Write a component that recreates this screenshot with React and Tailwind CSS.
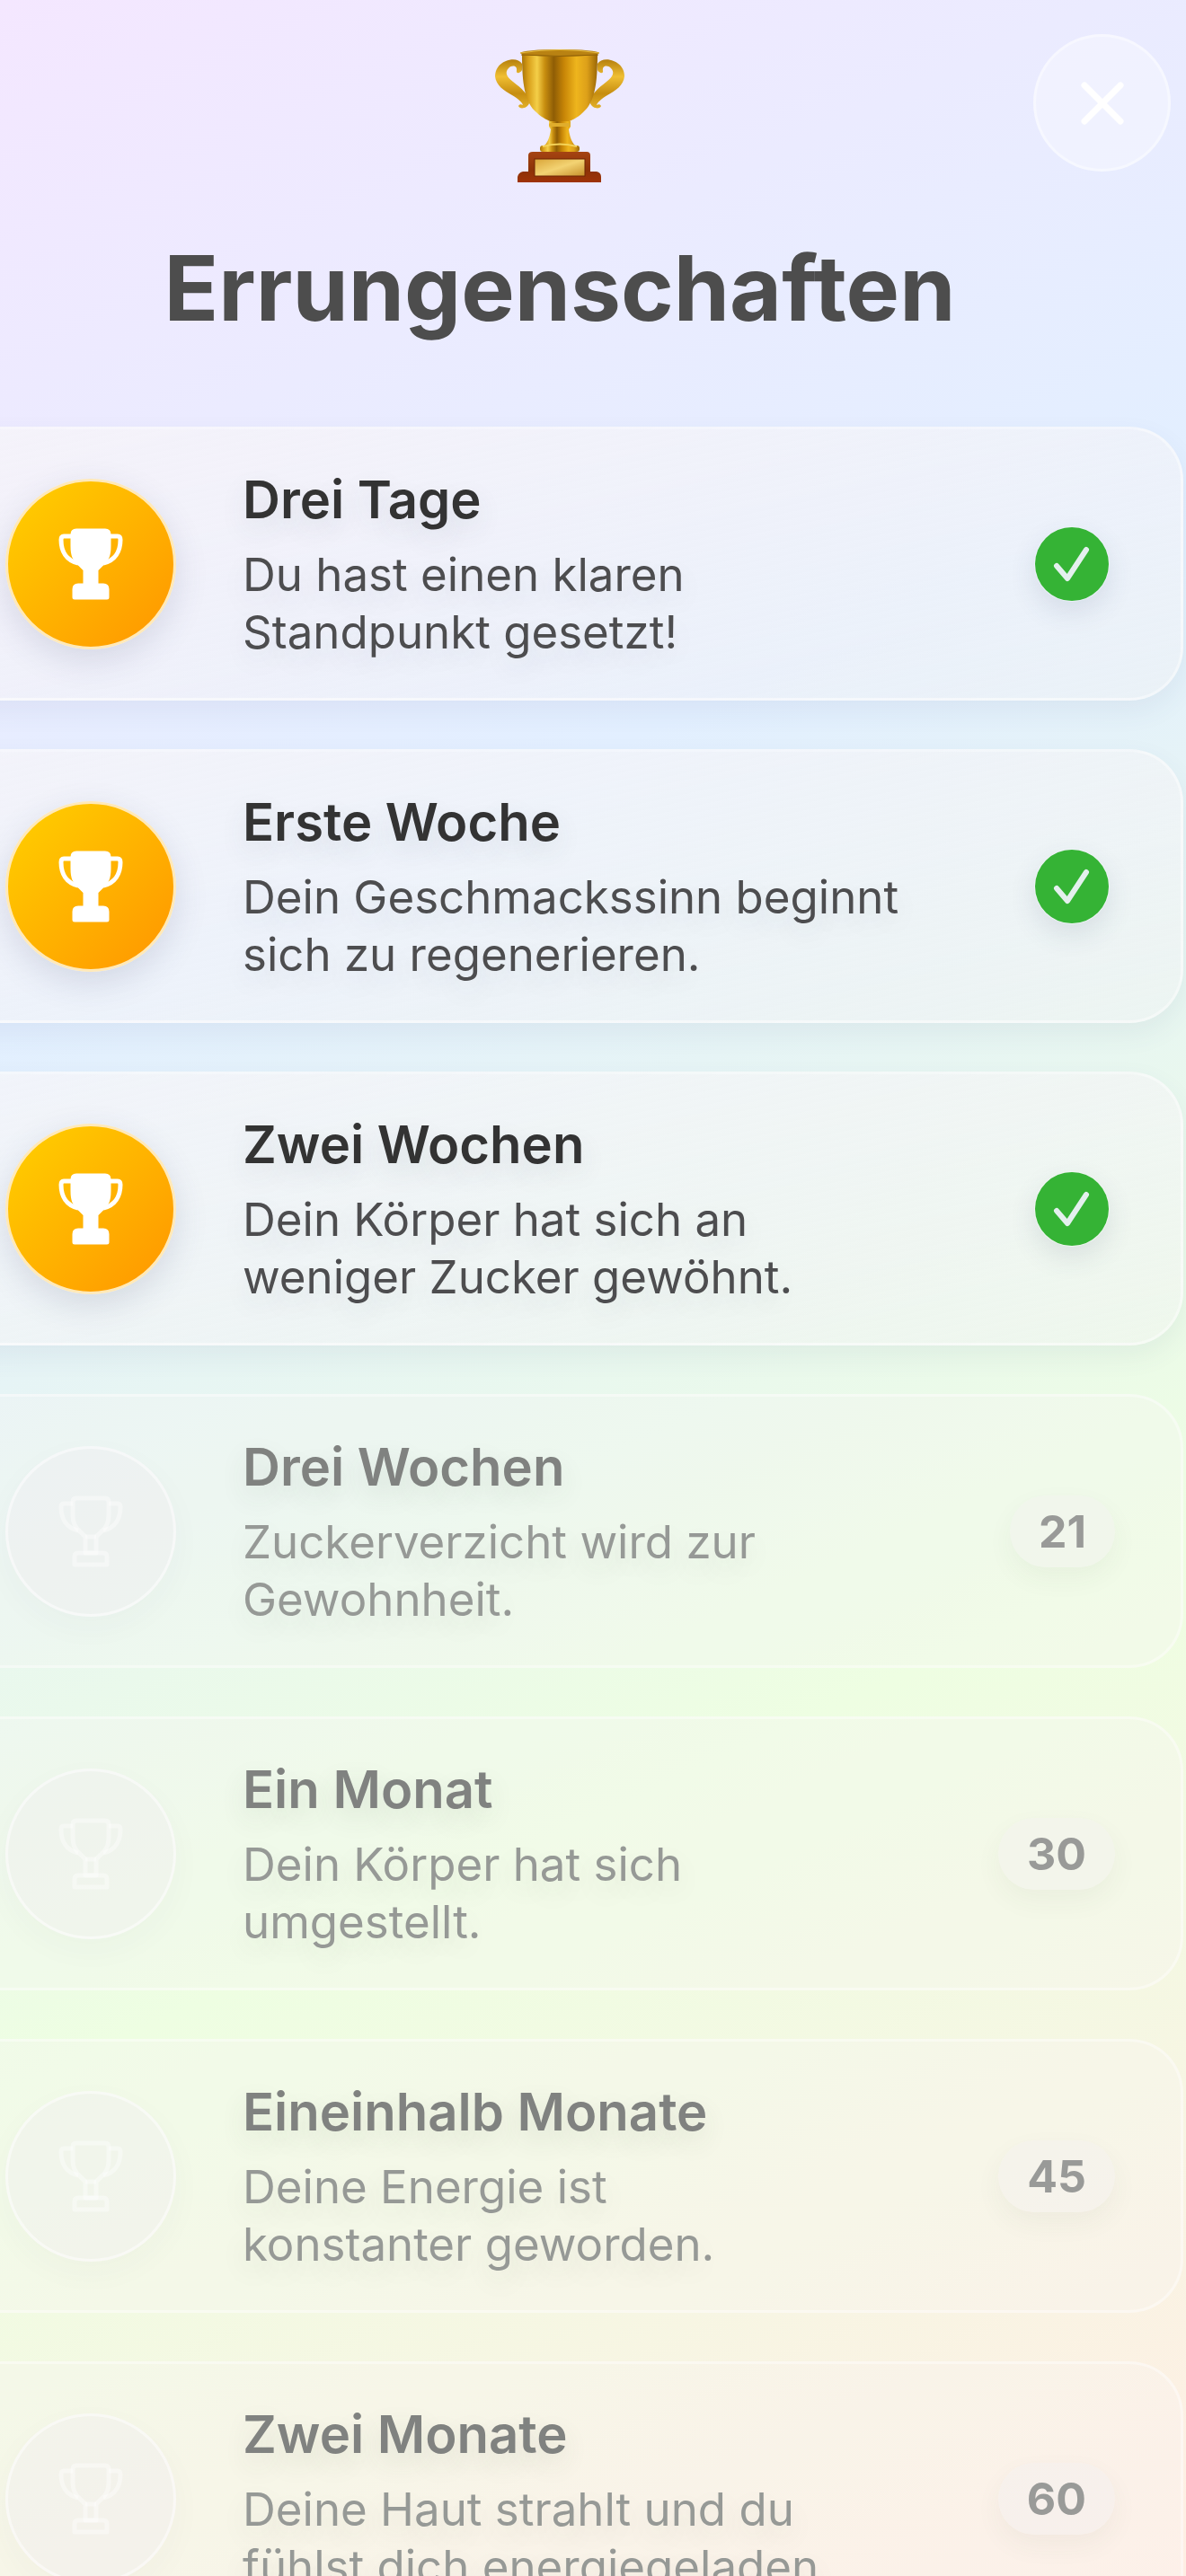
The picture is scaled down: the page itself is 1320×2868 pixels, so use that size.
import { useState } from 'react';

const achievements = [
    { days: 3, title: 'Drei Tage', text: ['Du hast einen klaren', 'Standpunkt gesetzt!'], unlocked: true },
    { days: 7, title: 'Erste Woche', text: ['Dein Geschmackssinn beginnt', 'sich zu regenerieren.'], unlocked: true },
    { days: 14, title: 'Zwei Wochen', text: ['Dein Körper hat sich an', 'weniger Zucker gewöhnt.'], unlocked: true },
    { days: 21, title: 'Drei Wochen', text: ['Zuckerverzicht wird zur', 'Gewohnheit.'], unlocked: false },
    { days: 30, title: 'Ein Monat', text: ['Dein Körper hat sich', 'umgestellt.'], unlocked: false },
    { days: 45, title: 'Eineinhalb Monate', text: ['Deine Energie ist', 'konstanter geworden.'], unlocked: false },
    { days: 60, title: 'Zwei Monate', text: ['Deine Haut strahlt und du', 'fühlst dich energiegeladen'], unlocked: false },
];

function GoldTrophy() {
    return (
        <svg width="144" height="150" viewBox="0 0 144 150" aria-hidden="true">
            <defs>
                <linearGradient id="cup" x1="0" x2="1" y1="0" y2="0">
                    <stop offset="0" stopColor="#a87408" />
                    <stop offset="0.08" stopColor="#d79d18" />
                    <stop offset="0.2" stopColor="#f4cf48" />
                    <stop offset="0.3" stopColor="#c98f10" />
                    <stop offset="0.42" stopColor="#8f5d05" />
                    <stop offset="0.56" stopColor="#c88607" />
                    <stop offset="0.72" stopColor="#eeb51d" />
                    <stop offset="0.86" stopColor="#dda019" />
                    <stop offset="1" stopColor="#9a6706" />
                </linearGradient>
                <linearGradient id="handle" x1="0" x2="0" y1="0" y2="1">
                    <stop offset="0" stopColor="#b57f0c" />
                    <stop offset="0.35" stopColor="#f0bf33" />
                    <stop offset="0.7" stopColor="#c68d10" />
                    <stop offset="1" stopColor="#e2b028" />
                </linearGradient>
                <linearGradient id="wood" x1="0" x2="0" y1="0" y2="1">
                    <stop offset="0" stopColor="#a54412" />
                    <stop offset="0.6" stopColor="#8c3207" />
                    <stop offset="1" stopColor="#9f3308" />
                </linearGradient>
                <linearGradient id="plate" x1="0" x2="1" y1="0" y2="1">
                    <stop offset="0" stopColor="#d9a437" />
                    <stop offset="0.5" stopColor="#f3d373" />
                    <stop offset="1" stopColor="#c68f2a" />
                </linearGradient>
            </defs>
            <path
                d="M30 16C27 11 19 10 12 13C4 16 0 23 0 30C1 40 10 46 19 51C26 55 30 59 31 62C29 61 27 61 26 63C27 67 36 66 38 60C38 50 29 43 20 36C12 30 11 25 15 21C19 17 25 18 24 24C23 27 28 27 30 23Z"
                fill="url(#handle)"
            />
            <path
                d="M114 16C117 11 125 10 132 13C140 16 144 23 144 30C143 40 134 46 125 51C118 55 114 59 113 62C115 61 117 61 118 63C117 67 108 66 106 60C106 50 115 43 124 36C132 30 133 25 129 21C125 17 119 18 120 24C121 27 116 27 114 23Z"
                fill="url(#handle)"
            />
            <path d="M30 5C30 38 33 59 46 70C53 77 60 79 63 81L81 81C84 79 91 77 98 70C111 59 114 38 114 5Z" fill="url(#cup)" />
            <ellipse cx="72" cy="4" rx="44" ry="4" fill="#b98212" />
            <path d="M28 4Q72 -3 116 4" fill="none" stroke="#e3b83d" strokeWidth="1" />
            <path d="M29 6Q72 9 115 6" fill="none" stroke="#8d5f08" strokeWidth="1" />
            <path d="M60 80H84V86L82 89C83 98 86 105 91 109H53C58 105 61 98 62 89L60 86Z" fill="url(#cup)" />
            <rect x="60" y="82" width="24" height="4" rx="2" fill="#e0ad2c" />
            <rect x="50" y="107" width="44" height="7" rx="3" fill="url(#cup)" />
            <path d="M53 108Q72 103 91 108" fill="none" stroke="#f5d55a" strokeWidth="2" />
            <path d="M42 114H102Q106 114 106 118V136H113Q118 137 118 142V148H25V142Q26 137 31 136H37V118Q37 114 42 114Z" fill="url(#wood)" />
            <rect x="44" y="122" width="56" height="19" fill="url(#plate)" stroke="#6f2604" />
        </svg>
    );
}

function TrophyIcon({ filled }) {
    return (
        <svg
            className="size-20"
            viewBox="0 0 80 80"
            fill={filled ? 'currentColor' : 'none'}
            stroke="currentColor"
            strokeWidth="5"
            strokeLinejoin="round"
            aria-hidden="true"
        >
            <path d="M24 3H56Q60 3 60 7V20C60 30 58 35 52 40L46 46V64H34V46L28 40C22 35 20 30 20 20V7Q20 3 24 3Z" />
            <path fill="none" d="M20 9H10Q7 9 7 13C7 26 13 36 26 39" />
            <path fill="none" d="M60 9H70Q73 9 73 13C73 26 67 36 54 39" />
            <path d="M26 64H54Q58 64 58 68V77H22V68Q22 64 26 64Z" />
            {!filled && <path d="M34 46H46" />}
        </svg>
    );
}

function Achievement({ days, title, text, unlocked }) {
    return (
        <li
            className={
                unlocked
                    ? 'flex h-[305px] items-center rounded-[60px] border-3 border-white/40 bg-linear-to-br from-[#f8f6f8]/70 to-[#f4f2f4]/40 pr-[79px] pl-[74px] shadow-[0_12px_30px_rgba(70,90,130,0.07)]'
                    : 'flex h-[305px] items-center rounded-[60px] border-3 border-white/40 bg-[#f8f4f4]/30 pr-[73px] pl-[74px]'
            }
        >
            <span
                className={
                    unlocked
                        ? 'flex size-[190px] shrink-0 items-center justify-center rounded-full border-3 border-[#ffe9b8] bg-linear-to-br from-[#ffd000] to-[#ff9500] text-white shadow-[0_12px_36px_rgba(60,70,110,0.15)]'
                        : 'flex size-[190px] shrink-0 items-center justify-center rounded-full border-3 border-white/50 bg-[#f1edf0]/40 text-white/40 shadow-[0_12px_36px_rgba(60,70,110,0.03)]'
                }
            >
                <TrophyIcon filled={unlocked} />
            </span>
            <div className="ml-[74px] flex-1">
                <h2
                    className={
                        unlocked
                            ? 'text-[58px] leading-[72px] font-semibold text-[#333333] [text-shadow:0_12px_30px_rgba(60,70,90,0.12)]'
                            : 'text-[58px] leading-[72px] font-semibold text-[#808280] [text-shadow:0_12px_30px_rgba(60,70,60,0.12)]'
                    }
                >
                    {title}
                </h2>
                <p
                    className={
                        unlocked
                            ? 'mt-4 text-[51px] leading-[64px] text-[#4d4d4f] [text-shadow:0_12px_30px_rgba(60,70,90,0.1)]'
                            : 'mt-4 text-[51px] leading-[64px] text-[#969996] [text-shadow:0_12px_30px_rgba(60,70,60,0.1)]'
                    }
                >
                    {text[0]}
                    <br />
                    {text[1]}
                </p>
            </div>
            {unlocked ? (
                <svg className="size-[84px] shrink-0 rounded-full shadow-[0_12px_30px_rgba(60,70,110,0.12)]" viewBox="0 0 84 84" role="img" aria-label="Erreicht">
                    <circle cx="42" cy="42" r="41" fill="#35b335" />
                    <path d="M25 44L37 58L58 26" fill="none" stroke="#e4f0ee" strokeWidth="6" strokeLinecap="round" strokeLinejoin="round" />
                </svg>
            ) : (
                <span className="shrink-0 rounded-full bg-[#f3f0f0]/40 px-[32px] py-[10px] text-[50px] leading-[60px] font-bold text-[#999a98] shadow-[0_12px_30px_rgba(60,70,60,0.05)]">
                    {days}
                </span>
            )}
        </li>
    );
}

export default function App() {
    const [open, setOpen] = useState(true);

    if (!open) return null;

    return (
        <div className="relative h-screen overflow-hidden bg-[linear-gradient(155deg,#f4e7ff_0%,#e2efff_33%,#eefee2_67%,#ffeee4_100%)] font-['Inter',sans-serif]">
            <button
                type="button"
                aria-label="Schließen"
                onClick={() => setOpen(false)}
                className="absolute top-[38px] right-[17px] flex size-[153px] items-center justify-center rounded-full border-3 border-white/40 bg-white/35 text-white"
            >
                <svg className="size-12" viewBox="0 0 48 48" fill="none" stroke="currentColor" strokeWidth="7" strokeLinecap="round" aria-hidden="true">
                    <path d="M4 4L44 44M44 4L4 44" />
                </svg>
            </button>

            {/* Sheet content runs past the left edge */}
            <main className="-ml-[71px] pt-[55px] pr-[3px]">
                <header className="flex flex-col items-center">
                    <GoldTrophy />
                    <h1 className="mt-14 text-[100px] leading-[120px] font-bold text-[#4d4d4d]">Errungenschaften</h1>
                </header>
                <ul className="mt-[94px] flex flex-col gap-[54px]">
                    {achievements.map((item) => (
                        <Achievement key={item.days} {...item} />
                    ))}
                </ul>
            </main>
        </div>
    );
}
